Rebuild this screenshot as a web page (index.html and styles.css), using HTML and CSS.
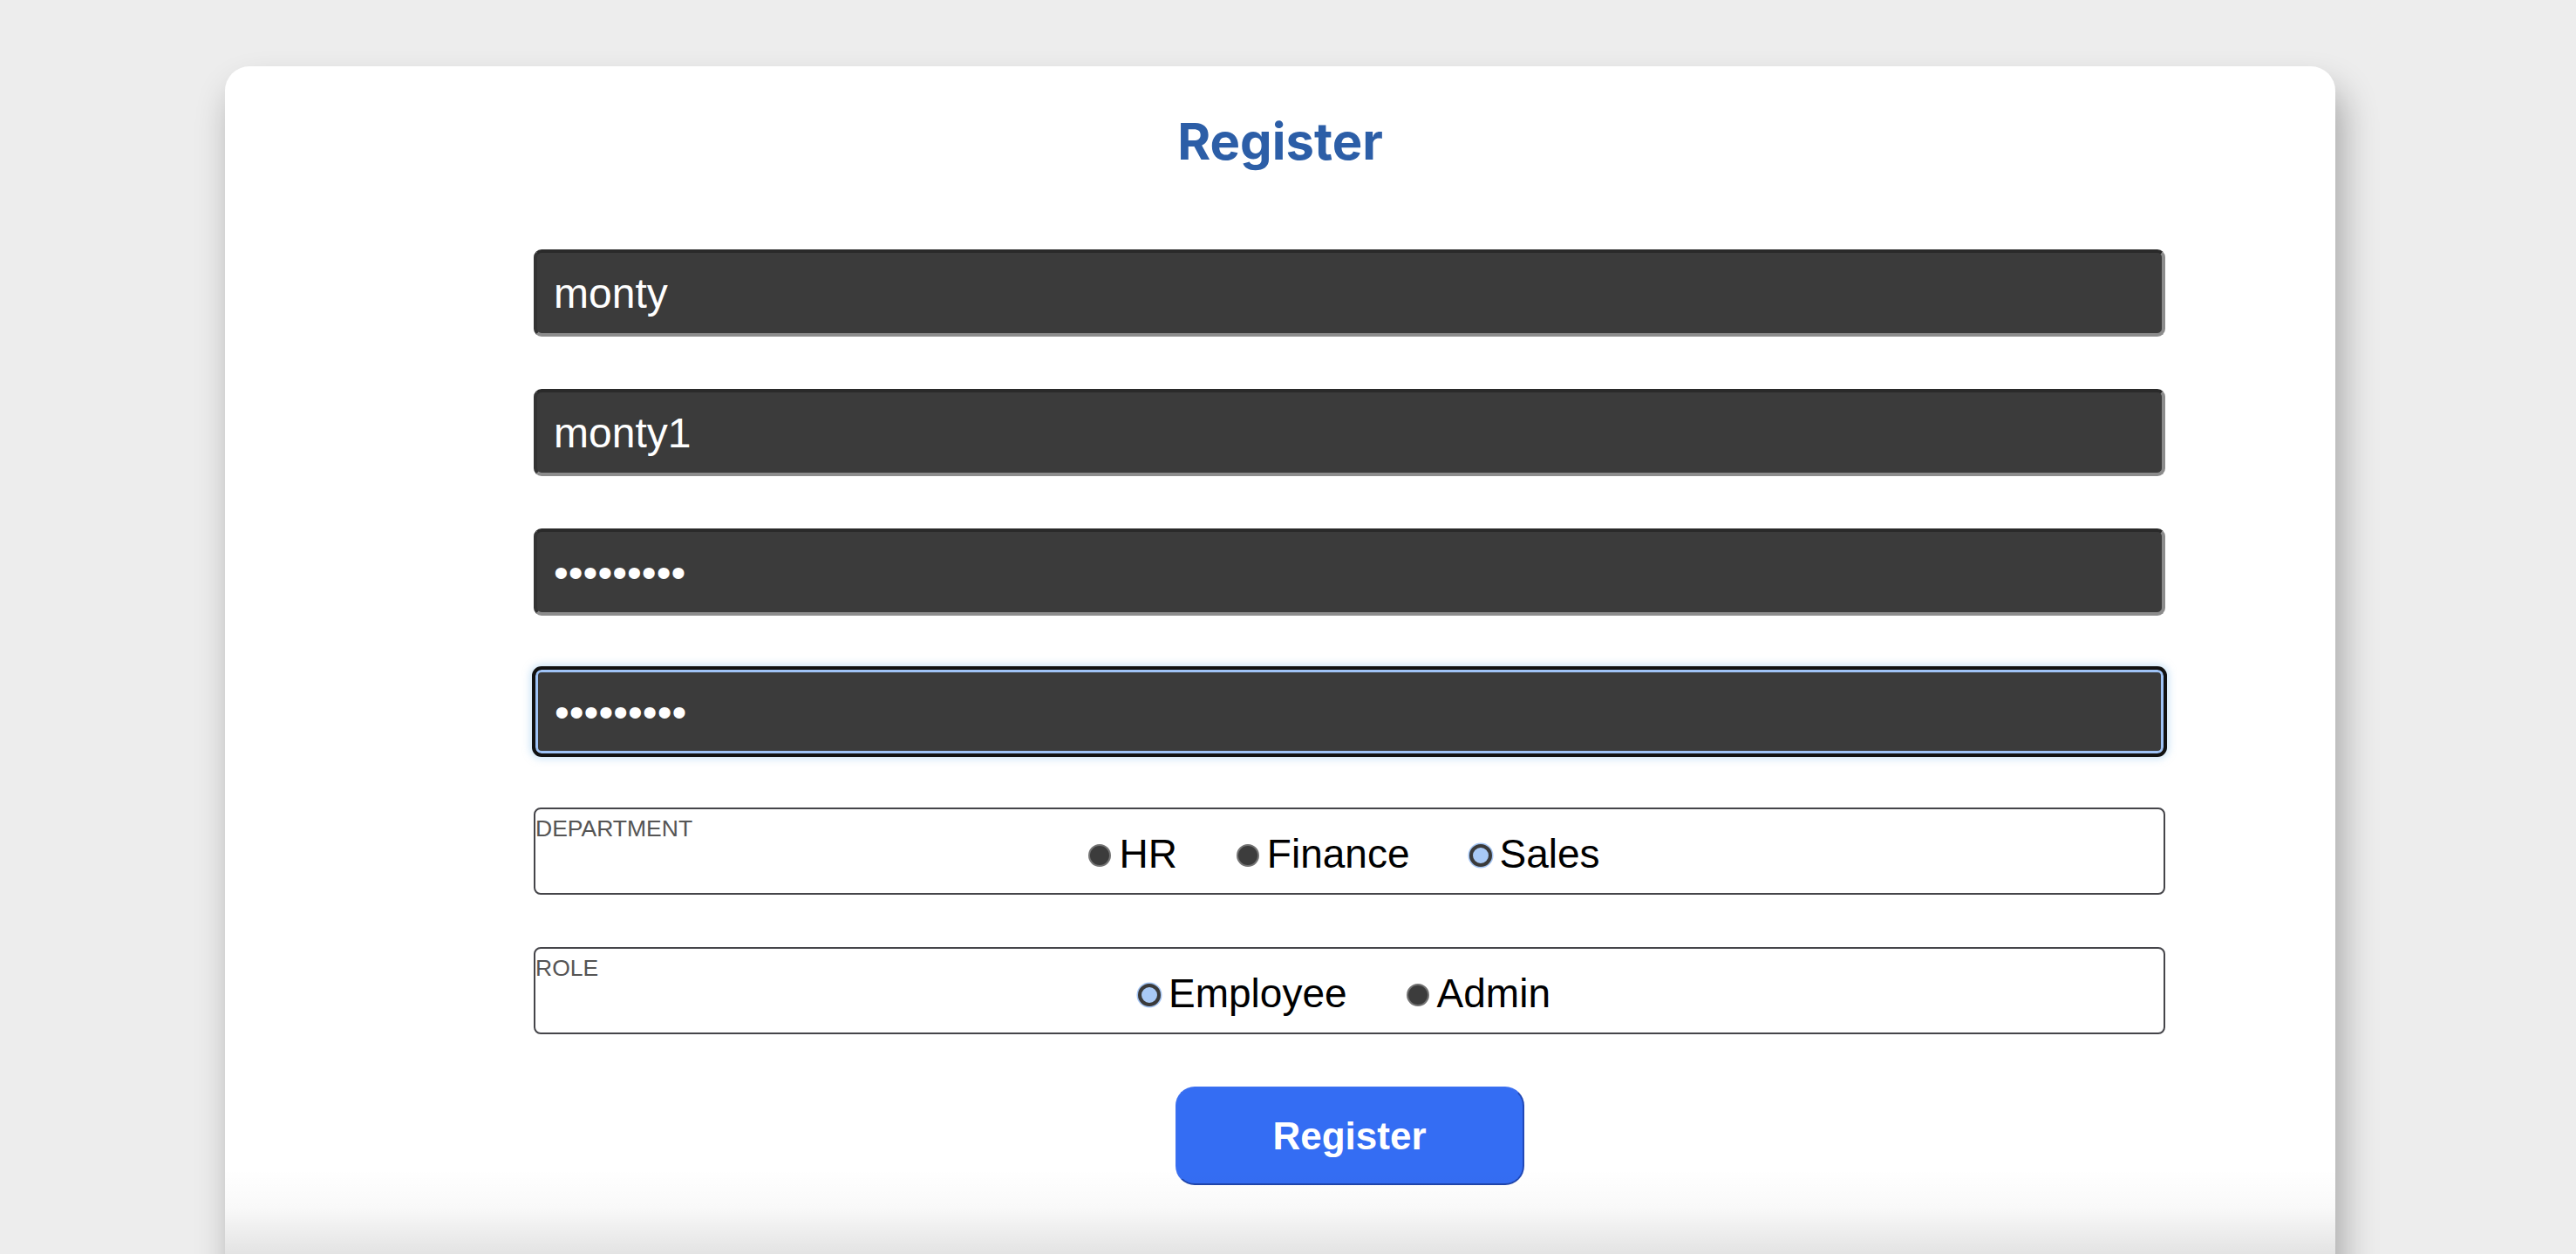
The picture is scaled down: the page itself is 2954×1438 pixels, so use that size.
FILE: index.html
```html
<!DOCTYPE html>
<html lang="en">
<head>
<meta charset="utf-8">
<title>Register</title>
<link rel="stylesheet" href="styles.css">
</head>
<body>
<main class="page">
  <section class="card">
    <h1 class="title">Register</h1>
    <form class="form">
      <input class="field" type="text" value="monty">
      <input class="field" type="text" value="monty1">
      <input class="field" type="password" value="monty1234">
      <input class="field field--focused" type="password" value="monty1234">
      <div class="group">
        <span class="group-label">DEPARTMENT</span>
        <div class="options">
          <label class="option"><input class="radio" type="radio" name="dept"><span>HR</span></label>
          <label class="option"><input class="radio" type="radio" name="dept"><span>Finance</span></label>
          <label class="option"><input class="radio" type="radio" name="dept" checked><span>Sales</span></label>
        </div>
      </div>
      <div class="group">
        <span class="group-label">ROLE</span>
        <div class="options">
          <label class="option"><input class="radio" type="radio" name="role" checked><span>Employee</span></label>
          <label class="option"><input class="radio" type="radio" name="role"><span>Admin</span></label>
        </div>
      </div>
      <button class="submit" type="button">Register</button>
    </form>
  </section>
</main>
</body>
</html>
```

FILE: styles.css
```css
html, body {
  margin: 0;
  height: 100%;
  overflow: hidden;
  background: #ededed;
}

.page {
  padding: 76px 0 0 258px;
}

.card {
  position: relative;
  width: 2420px;
  height: 1422px;
  background: #ffffff;
  border-radius: 28px;
  box-shadow: 8px 25px 40px rgba(0, 0, 0, 0.3);
}

.card::after {
  content: "";
  position: absolute;
  left: 0;
  right: 0;
  top: 1264px;
  height: 98px;
  background: linear-gradient(to bottom, rgba(0, 0, 0, 0) 0%, rgba(0, 0, 0, 0.025) 45%, rgba(0, 0, 0, 0.11) 100%);
  pointer-events: none;
}

.title {
  margin: 0;
  padding-top: 51px;
  font: 700 58px/70px Inter, "Liberation Sans", sans-serif;
  color: #2c5ea7;
  text-align: center;
}

.form {
  margin: 89px 0 0 354px;
  width: 1871px;
  display: flex;
  flex-direction: column;
  gap: 60px;
}

.field {
  box-sizing: border-box;
  display: block;
  width: 100%;
  height: 100px;
  margin: 0;
  padding: 0 19px;
  background: #3b3b3b;
  color: #ffffff;
  font: 48px "Liberation Sans", Arial, sans-serif;
  border: 4px solid;
  border-color: #2a2a2a #8c8c8c #8c8c8c #333333;
  border-radius: 9px;
  outline: none;
}

.field--focused {
  border: 2px solid #111111;
  padding: 0 22px;
  box-shadow: 0 0 0 2px #111111, inset 0 0 0 3px #9fc3f6, 0 0 8px 4px rgba(150, 200, 240, 0.5);
}

.group {
  position: relative;
  box-sizing: border-box;
  height: 100px;
  border: 2px solid #45454a;
  border-radius: 8px;
  display: flex;
  align-items: center;
}

.group-label {
  position: absolute;
  top: 8px;
  left: 0;
  font: 26.5px/28px "Liberation Sans", Arial, sans-serif;
  color: #555555;
  white-space: nowrap;
}

.options {
  flex: 1;
  display: flex;
  justify-content: center;
  align-items: center;
  gap: 58px;
  padding: 5px 22px 0 0;
  font: 46px/46px "Liberation Sans", Arial, sans-serif;
  color: #000000;
}

.option {
  display: flex;
  align-items: center;
  gap: 9px;
  white-space: nowrap;
}

.radio {
  appearance: none;
  -webkit-appearance: none;
  box-sizing: border-box;
  width: 26px;
  height: 26px;
  margin: 5px 0 0 10px;
  border-radius: 50%;
  background: #3c3c3c;
  border: 2px solid #737373;
}

.radio:checked {
  background: #a8c9f6;
  border: 4px solid #3a3a3a;
  box-shadow: 0 0 0 1.5px #a3c4f3;
}

.submit {
  align-self: center;
  box-sizing: border-box;
  width: 400px;
  height: 113px;
  padding: 0;
  background: #346df3;
  border: 2px solid;
  border-color: #3a6ff0 #2149b8 #1f45ab #3a6ff0;
  border-radius: 22px;
  color: #ffffff;
  font: 700 44px/44px "Liberation Sans", Arial, sans-serif;
}
```
